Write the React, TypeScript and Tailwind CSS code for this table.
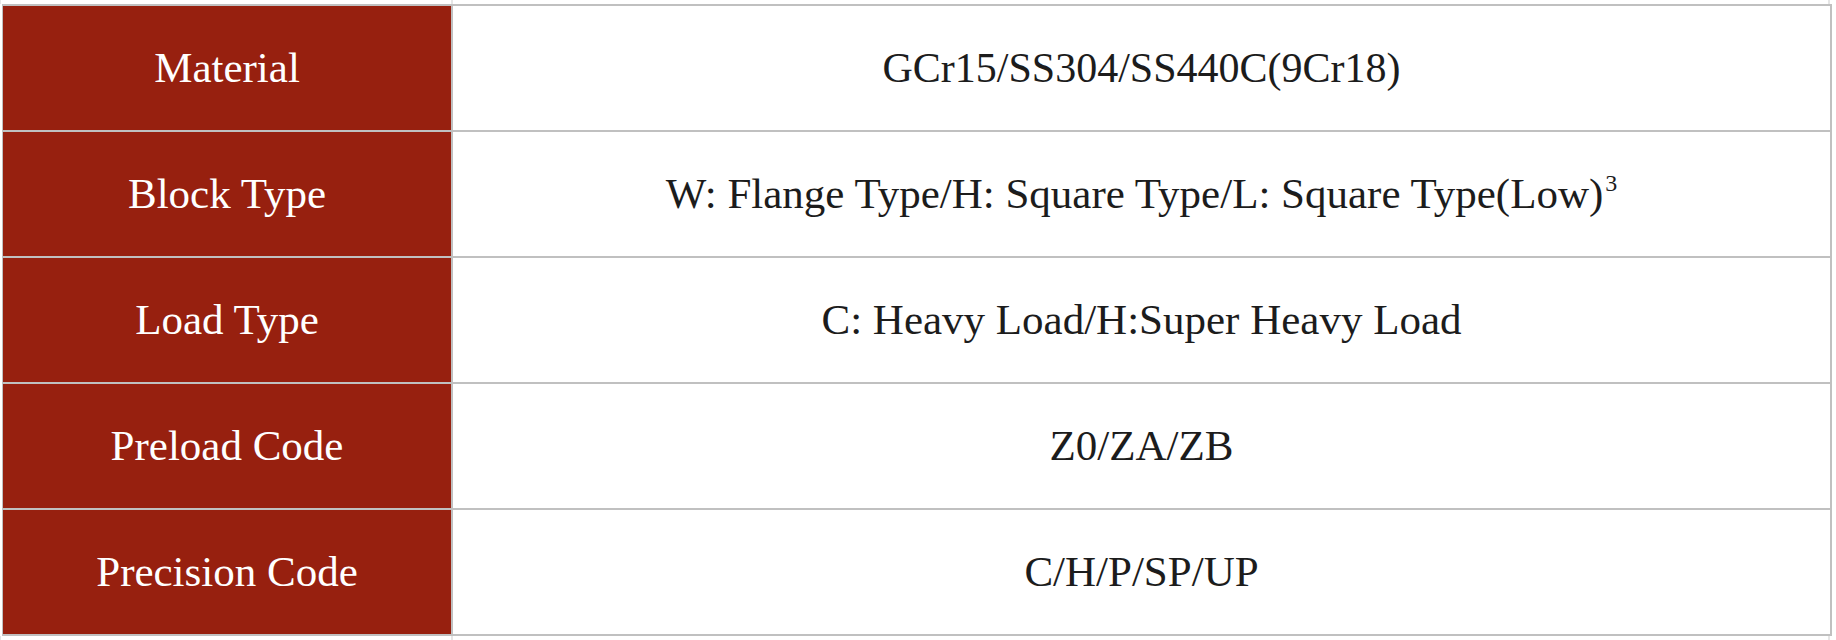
import React from "react";

const rows: { label: string; value: React.ReactNode; size: string }[] = [
  { label: "Material", value: "GCr15/SS304/SS440C(9Cr18)", size: "text-[42px]" },
  {
    label: "Block Type",
    value: (
      <>
        W: Flange Type/H: Square Type/L: Square Type(Low)
        <sup className="text-[24px] relative -top-[17px] ml-[2px]">3</sup>
      </>
    ),
    size: "text-[43px]",
  },
  { label: "Load Type", value: "C: Heavy Load/H:Super Heavy Load", size: "text-[43px]" },
  { label: "Preload Code", value: "Z0/ZA/ZB", size: "text-[43px]" },
  { label: "Precision Code", value: "C/H/P/SP/UP", size: "text-[43px]" },
];

function Strip() {
  return (
    <div className="flex h-[4px]">
      <div className="w-[2px] border-l border-[#e6e6e6]" />
      <div className="w-[451px] border-r-2 border-[#e6e6e6]" />
      <div className="w-[1377px] border-r-2 border-[#e6e6e6]" />
    </div>
  );
}

export default function App() {
  return (
    <div
      className="w-[1836px] h-[640px] bg-white overflow-hidden"
      style={{ fontFamily: '"Liberation Serif", "Times New Roman", serif' }}
    >
      <Strip />
      <div className="ml-[2px] w-[1830px] border-t-2 border-l border-[#c0c0c0]">
        {rows.map((r) => (
          <div key={r.label} className="flex h-[126px] border-b-2 border-[#c0c0c0]">
            <div className="w-[450px] shrink-0 bg-[#97200f] border-r-2 border-[#c0c0c0] flex items-center justify-center text-white text-[43px]">
              {r.label}
            </div>
            <div
              className={`flex-1 border-r-2 border-[#c0c0c0] flex items-center justify-center text-[#1c1c1c] ${r.size}`}
            >
              <span>{r.value}</span>
            </div>
          </div>
        ))}
      </div>
      <Strip />
    </div>
  );
}
